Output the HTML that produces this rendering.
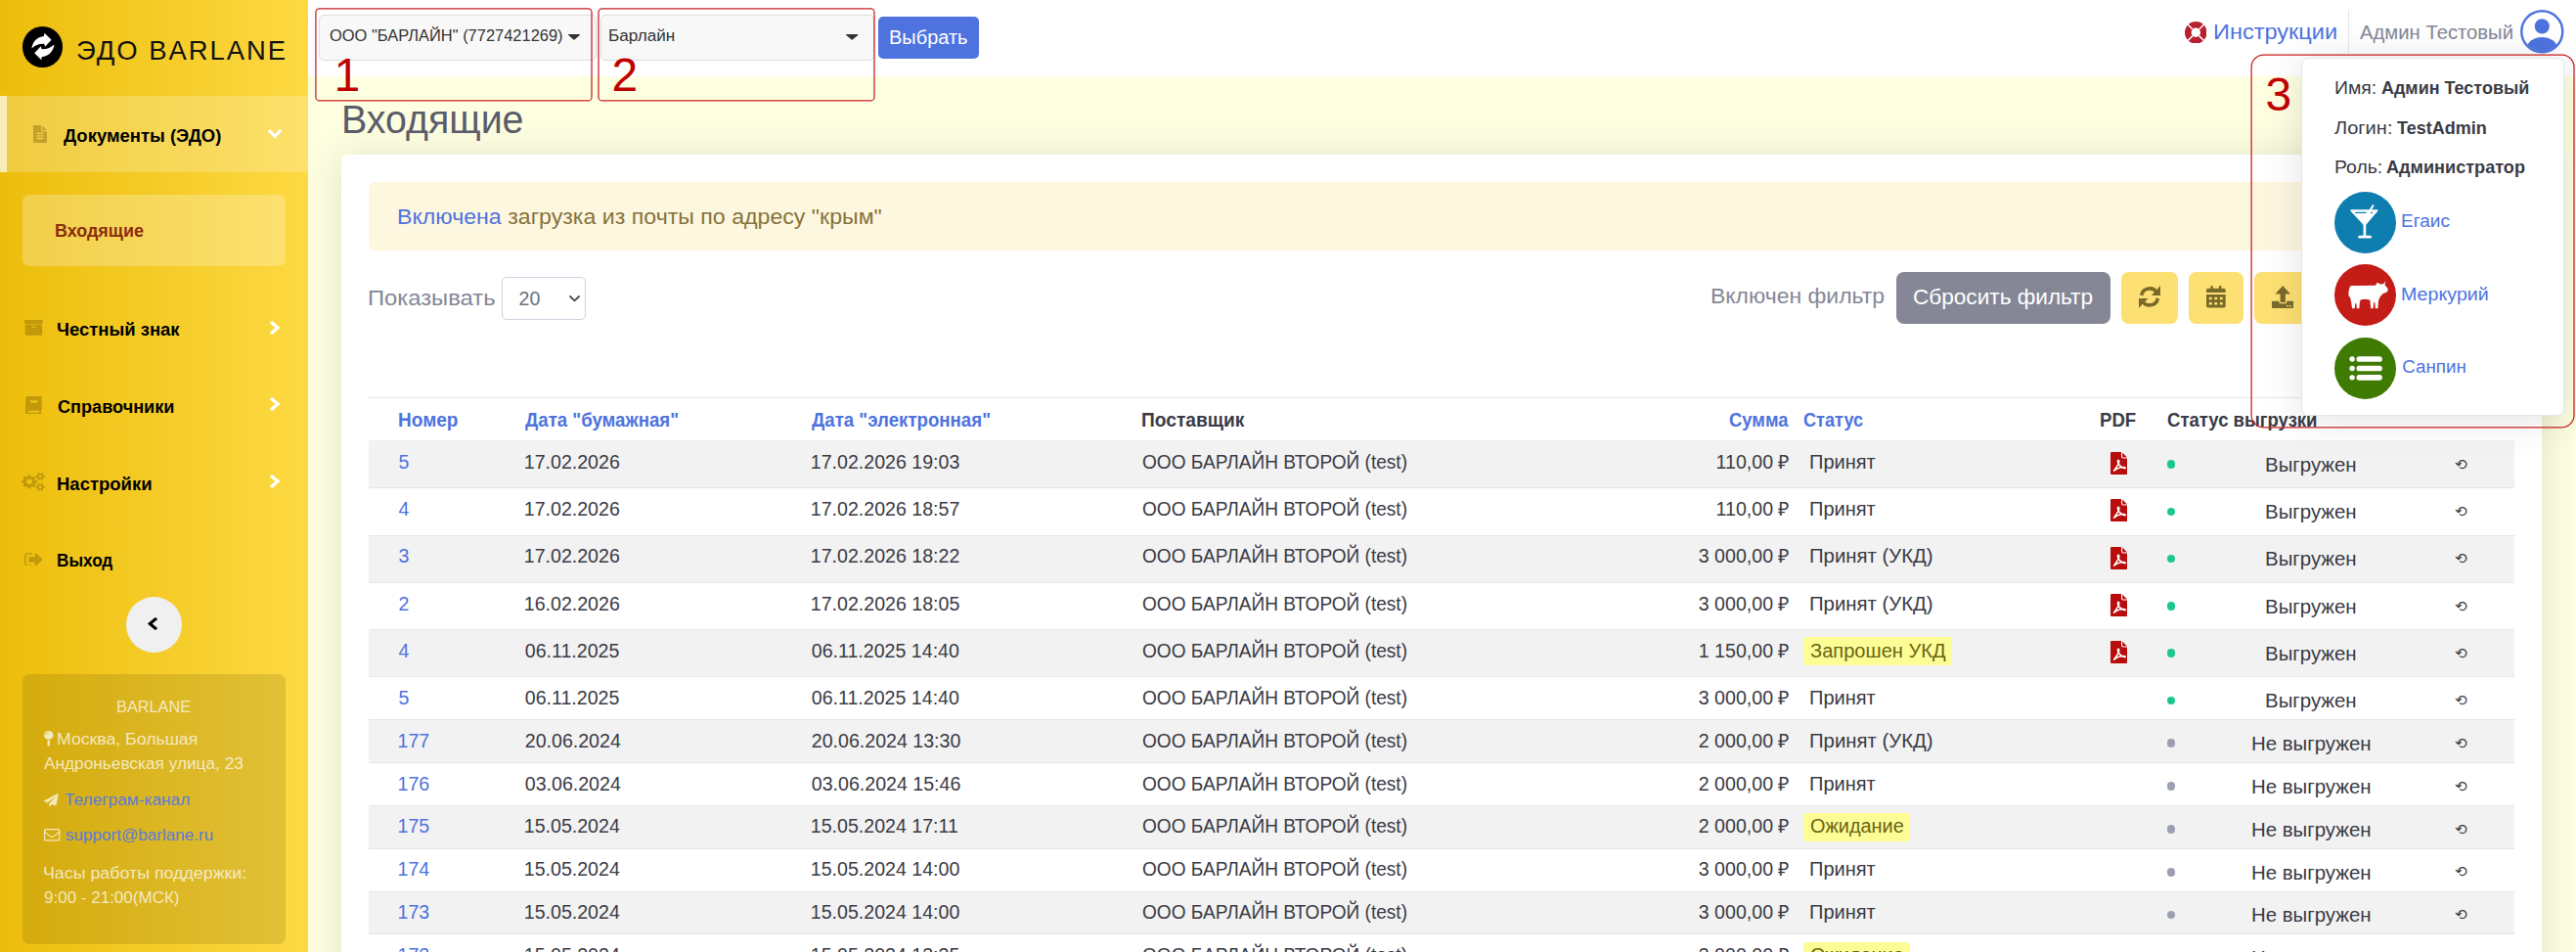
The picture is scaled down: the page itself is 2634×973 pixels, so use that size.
<!DOCTYPE html>
<html lang="ru"><head><meta charset="utf-8"><title>Входящие — ЭДО BARLANE</title>
<style>
html,body{margin:0;padding:0}
body{width:2634px;height:973px;overflow:hidden;position:relative;background:#fefee0;font-family:"Liberation Sans",sans-serif;}
.b{position:absolute;box-sizing:border-box;display:block}
.t{position:absolute;white-space:nowrap;line-height:1;}
a{color:inherit;text-decoration:none}
</style></head><body>
<div class="b" style="left:315px;top:78px;width:2319px;height:895px;background:#fefee1;"></div>
<div class="b" style="left:348.75px;top:158px;width:2250.5px;height:900px;background:#fff;border-radius:5.5px;box-shadow:0 3px 39px rgba(58,59,69,.15);"></div>
<div class="b" style="left:2632.6px;top:78px;width:1.4px;height:895px;background:#fdfdf4;"></div>
<div class="b" style="left:315px;top:0px;width:2319px;height:78px;background:#fff;"></div>
<div class="b" style="left:0px;top:0px;width:315px;height:973px;background:linear-gradient(90deg,#ecbd0b 0%,#fdd942 100%);"></div>
<div class="b" style="left:22.6px;top:27.2px;width:41.6px;height:41.6px;background:#000;border-radius:21px;"></div>
<svg class="b" style="left:22.6px;top:27.2px;" width="41.6" height="41.6" viewBox="0 0 41.6 41.6"><g fill="#fff"><path id="lg" d="M9.4 22.6 C10 16 15 10.5 22 10 L22.5 6.8 L29.6 13.8 L23 20.8 L22.3 17.9 C17 17.5 13 19.5 9.4 22.6 Z"/><path transform="rotate(180 20.9 20.5)" d="M9.4 22.6 C10 16 15 10.5 22 10 L22.5 6.8 L29.6 13.8 L23 20.8 L22.3 17.9 C17 17.5 13 19.5 9.4 22.6 Z"/></g></svg>
<div class="t" style="left:78.00px;top:37.80px;font-size:27.4px;color:#111;letter-spacing:2.0px;">ЭДО BARLANE</div>
<div class="b" style="left:0px;top:97.5px;width:315px;height:78.25px;background:rgba(255,255,255,.22);"></div>
<div class="b" style="left:0px;top:97.5px;width:6.5px;height:78.25px;background:rgba(255,255,255,.62);"></div>
<svg class="b" style="left:34px;top:128px;" width="14" height="18" viewBox="0 -1536 1536 1792" preserveAspectRatio="none"><path fill="rgba(120,90,0,.38)" transform="scale(1,-1)" d="M1468 1060q14 -14 28 -36h-472v472q22 -14 36 -28zM992 896h544v-1056q0 -40 -28 -68t-68 -28h-1344q-40 0 -68 28t-28 68v1600q0 40 28 68t68 28h800v-544q0 -40 28 -68t68 -28zM1152 160v64q0 14 -9 23t-23 9h-704q-14 0 -23 -9t-9 -23v-64q0 -14 9 -23t23 -9h704
q14 0 23 9t9 23zM1152 416v64q0 14 -9 23t-23 9h-704q-14 0 -23 -9t-9 -23v-64q0 -14 9 -23t23 -9h704q14 0 23 9t9 23zM1152 672v64q0 14 -9 23t-23 9h-704q-14 0 -23 -9t-9 -23v-64q0 -14 9 -23t23 -9h704q14 0 23 9t9 23z"/></svg>
<div class="t" style="left:64.50px;top:128.90px;font-size:19.2px;color:#000;font-weight:700;transform:scaleX(0.9619);transform-origin:0 0;">Документы (ЭДО)</div>
<svg class="b" style="left:274px;top:132px;" width="14" height="9.5" viewBox="90 -1003 1612 1035" preserveAspectRatio="none"><path fill="#fff" transform="scale(1,-1)" d="M1683 728l-742 -741q-19 -19 -45 -19t-45 19l-742 741q-19 19 -19 45.5t19 45.5l166 165q19 19 45 19t45 -19l531 -531l531 531q19 19 45 19t45 -19l166 -165q19 -19 19 -45.5t-19 -45.5z"/></svg>
<div class="b" style="left:22.7px;top:199px;width:269.8px;height:73.4px;background:rgba(255,255,255,.25);border-radius:7px;"></div>
<div class="t" style="left:55.71px;top:226.90px;font-size:18.2px;color:#8b2d0c;font-weight:700;transform:scaleX(0.9856);transform-origin:0 0;">Входящие</div>
<svg class="b" style="left:25px;top:327.2px;" width="18.8" height="15.7" viewBox="64 -1408 1664 1536" preserveAspectRatio="none"><path fill="rgba(120,90,0,.38)" transform="scale(1,-1)" d="M1088 704q0 26 -19 45t-45 19h-256q-26 0 -45 -19t-19 -45t19 -45t45 -19h256q26 0 45 19t19 45zM1664 896v-960q0 -26 -19 -45t-45 -19h-1408q-26 0 -45 19t-19 45v960q0 26 19 45t45 19h1408q26 0 45 -19t19 -45zM1728 1344v-256q0 -26 -19 -45t-45 -19h-1536
q-26 0 -45 19t-19 45v256q0 26 19 45t45 19h1536q26 0 45 -19t19 -45z"/></svg>
<div class="t" style="left:57.54px;top:326.90px;font-size:19.2px;color:#000;font-weight:700;transform:scaleX(0.9625);transform-origin:0 0;">Честный знак</div>
<svg class="b" style="left:275.8px;top:327.8px;" width="10.2" height="14" viewBox="90 -1510 1036 1612" preserveAspectRatio="none"><path fill="#fff" transform="scale(1,-1)" d="M1107 659l-742 -742q-19 -19 -45 -19t-45 19l-166 166q-19 19 -19 45t19 45l531 531l-531 531q-19 19 -19 45t19 45l166 166q19 19 45 19t45 -19l742 -742q19 -19 19 -45t-19 -45z"/></svg>
<svg class="b" style="left:26.2px;top:404.5px;" width="16.7" height="18.7" viewBox="0 0 16.6 18.6"><path fill-rule="evenodd" fill="rgba(120,90,0,.38)" d="M3 0 H15.4 Q16.6 0 16.6 1.2 V13.4 Q16.6 14.3 15.8 14.5 V16.8 Q16.6 17 16.6 17.8 Q16.6 18.6 15.6 18.6 H3 Q0 18.6 0 15.6 V3 Q0 0 3 0 Z M5 4.2 V6.6 H12.6 V4.2 Z M3.2 14.8 Q2.2 14.8 2.2 15.8 Q2.2 16.6 3.2 16.6 H13.8 V14.8 Z"/></svg>
<div class="t" style="left:58.50px;top:405.90px;font-size:19.2px;color:#000;font-weight:700;transform:scaleX(0.9439);transform-origin:0 0;">Справочники</div>
<svg class="b" style="left:275.8px;top:406.4px;" width="10.2" height="14" viewBox="90 -1510 1036 1612" preserveAspectRatio="none"><path fill="#fff" transform="scale(1,-1)" d="M1107 659l-742 -742q-19 -19 -45 -19t-45 19l-166 166q-19 19 -19 45t19 45l531 531l-531 531q-19 19 -19 45t19 45l166 166q19 19 45 19t45 -19l742 -742q19 -19 19 -45t-19 -45z"/></svg>
<svg class="b" style="left:22.4px;top:483.2px;" width="23.9" height="18.7" viewBox="0 -1520 1920 1761" preserveAspectRatio="none"><path fill="rgba(120,90,0,.38)" transform="scale(1,-1)" d="M896 640q0 106 -75 181t-181 75t-181 -75t-75 -181t75 -181t181 -75t181 75t75 181zM1664 128q0 52 -38 90t-90 38t-90 -38t-38 -90q0 -53 37.5 -90.5t90.5 -37.5t90.5 37.5t37.5 90.5zM1664 1152q0 52 -38 90t-90 38t-90 -38t-38 -90q0 -53 37.5 -90.5t90.5 -37.5
t90.5 37.5t37.5 90.5zM1280 731v-185q0 -10 -7 -19.5t-16 -10.5l-155 -24q-11 -35 -32 -76q34 -48 90 -115q7 -11 7 -20q0 -12 -7 -19q-23 -30 -82.5 -89.5t-78.5 -59.5q-11 0 -21 7l-115 90q-37 -19 -77 -31q-11 -108 -23 -155q-7 -24 -30 -24h-186q-11 0 -20 7.5t-10 17.5
l-23 153q-34 10 -75 31l-118 -89q-7 -7 -20 -7q-11 0 -21 8q-144 133 -144 160q0 9 7 19q10 14 41 53t47 61q-23 44 -35 82l-152 24q-10 1 -17 9.5t-7 19.5v185q0 10 7 19.5t16 10.5l155 24q11 35 32 76q-34 48 -90 115q-7 11 -7 20q0 12 7 20q22 30 82 89t79 59q11 0 21 -7
l115 -90q34 18 77 32q11 108 23 154q7 24 30 24h186q11 0 20 -7.5t10 -17.5l23 -153q34 -10 75 -31l118 89q8 7 20 7q11 0 21 -8q144 -133 144 -160q0 -8 -7 -19q-12 -16 -42 -54t-45 -60q23 -48 34 -82l152 -23q10 -2 17 -10.5t7 -19.5zM1920 198v-140q0 -16 -149 -31
q-12 -27 -30 -52q51 -113 51 -138q0 -4 -4 -7q-122 -71 -124 -71q-8 0 -46 47t-52 68q-20 -2 -30 -2t-30 2q-14 -21 -52 -68t-46 -47q-2 0 -124 71q-4 3 -4 7q0 25 51 138q-18 25 -30 52q-149 15 -149 31v140q0 16 149 31q13 29 30 52q-51 113 -51 138q0 4 4 7q4 2 35 20
t59 34t30 16q8 0 46 -46.5t52 -67.5q20 2 30 2t30 -2q51 71 92 112l6 2q4 0 124 -70q4 -3 4 -7q0 -25 -51 -138q17 -23 30 -52q149 -15 149 -31zM1920 1222v-140q0 -16 -149 -31q-12 -27 -30 -52q51 -113 51 -138q0 -4 -4 -7q-122 -71 -124 -71q-8 0 -46 47t-52 68
q-20 -2 -30 -2t-30 2q-14 -21 -52 -68t-46 -47q-2 0 -124 71q-4 3 -4 7q0 25 51 138q-18 25 -30 52q-149 15 -149 31v140q0 16 149 31q13 29 30 52q-51 113 -51 138q0 4 4 7q4 2 35 20t59 34t30 16q8 0 46 -46.5t52 -67.5q20 2 30 2t30 -2q51 71 92 112l6 2q4 0 124 -70
q4 -3 4 -7q0 -25 -51 -138q17 -23 30 -52q149 -15 149 -31z"/></svg>
<div class="t" style="left:57.54px;top:484.90px;font-size:19.2px;color:#000;font-weight:700;transform:scaleX(0.9644);transform-origin:0 0;">Настройки</div>
<svg class="b" style="left:275.8px;top:485.3px;" width="10.2" height="14" viewBox="90 -1510 1036 1612" preserveAspectRatio="none"><path fill="#fff" transform="scale(1,-1)" d="M1107 659l-742 -742q-19 -19 -45 -19t-45 19l-166 166q-19 19 -19 45t19 45l531 531l-531 531q-19 19 -19 45t19 45l166 166q19 19 45 19t45 -19l742 -742q19 -19 19 -45t-19 -45z"/></svg>
<svg class="b" style="left:24.7px;top:564.7px;" width="18.7" height="13.8" viewBox="0 -1280 1568 1280" preserveAspectRatio="none"><path fill="rgba(120,90,0,.38)" transform="scale(1,-1)" d="M640 96q0 -4 1 -20t0.5 -26.5t-3 -23.5t-10 -19.5t-20.5 -6.5h-320q-119 0 -203.5 84.5t-84.5 203.5v704q0 119 84.5 203.5t203.5 84.5h320q13 0 22.5 -9.5t9.5 -22.5q0 -4 1 -20t0.5 -26.5t-3 -23.5t-10 -19.5t-20.5 -6.5h-320q-66 0 -113 -47t-47 -113v-704
q0 -66 47 -113t113 -47h288h11h13t11.5 -1t11.5 -3t8 -5.5t7 -9t2 -13.5zM1568 640q0 -26 -19 -45l-544 -544q-19 -19 -45 -19t-45 19t-19 45v288h-448q-26 0 -45 19t-19 45v384q0 26 19 45t45 19h448v288q0 26 19 45t45 19t45 -19l544 -544q19 -19 19 -45z"/></svg>
<div class="t" style="left:57.61px;top:562.90px;font-size:19.2px;color:#000;font-weight:700;transform:scaleX(0.8934);transform-origin:0 0;">Выход</div>
<div class="b" style="left:129.3px;top:610px;width:56.7px;height:56.7px;background:#f0f0f0;border-radius:29px;"></div>
<svg class="b" style="left:151px;top:631px;" width="10" height="13" viewBox="154 -1510 1036 1612" preserveAspectRatio="none"><path fill="#000" transform="scale(1,-1)" d="M1171 1235l-531 -531l531 -531q19 -19 19 -45t-19 -45l-166 -166q-19 -19 -45 -19t-45 19l-742 742q-19 19 -19 45t19 45l742 742q19 19 45 19t45 -19l166 -166q19 -19 19 -45t-19 -45z"/></svg>
<div class="b" style="left:22.8px;top:689.2px;width:269.7px;height:275.6px;background:rgba(0,0,0,.1);border-radius:7px;"></div>
<div class="t" style="left:119.13px;top:715.10px;font-size:16.8px;color:rgba(255,255,255,.72);transform:scaleX(0.9721);transform-origin:0 0;">BARLANE</div>
<svg class="b" style="left:45.3px;top:747px;" width="9.5" height="15.5" viewBox="0 -1536 1024 1792" preserveAspectRatio="none"><path fill="rgba(255,255,255,.72)" transform="scale(1,-1)" d="M512 448q66 0 128 15v-655q0 -26 -19 -45t-45 -19h-128q-26 0 -45 19t-19 45v655q62 -15 128 -15zM512 1536q212 0 362 -150t150 -362t-150 -362t-362 -150t-362 150t-150 362t150 362t362 150zM512 1312q14 0 23 9t9 23t-9 23t-23 9q-146 0 -249 -103t-103 -249
q0 -14 9 -23t23 -9t23 9t9 23q0 119 84.5 203.5t203.5 84.5z"/></svg>
<div class="t" style="left:57.95px;top:748.10px;font-size:16.8px;color:rgba(255,255,255,.72);transform:scaleX(1.0524);transform-origin:0 0;">Москва, Большая</div>
<div class="t" style="left:45.30px;top:773.10px;font-size:16.8px;color:rgba(255,255,255,.72);transform:scaleX(1.0280);transform-origin:0 0;">Андроньевская улица, 23</div>
<svg class="b" style="left:45.3px;top:810.5px;" width="14.7" height="13.5" viewBox="-0.1111111119389534 -1536 1792.0341796875 1792" preserveAspectRatio="none"><path fill="rgba(255,255,255,.72)" transform="scale(1,-1)" d="M1764 1525q33 -24 27 -64l-256 -1536q-5 -29 -32 -45q-14 -8 -31 -8q-11 0 -24 5l-453 185l-242 -295q-18 -23 -49 -23q-13 0 -22 4q-19 7 -30.5 23.5t-11.5 36.5v349l864 1059l-1069 -925l-395 162q-37 14 -40 55q-2 40 32 59l1664 960q15 9 32 9q20 0 36 -11z"/></svg>
<div class="t" style="left:65.60px;top:810.10px;font-size:16.8px;color:#5a7bd8;transform:scaleX(1.0294);transform-origin:0 0;"><a>Телеграм-канал</a></div>
<svg class="b" style="left:45.3px;top:847px;" width="16.3" height="12.5" viewBox="0 -1280 1792 1408" preserveAspectRatio="none"><path fill="rgba(255,255,255,.72)" transform="scale(1,-1)" d="M1664 32v768q-32 -36 -69 -66q-268 -206 -426 -338q-51 -43 -83 -67t-86.5 -48.5t-102.5 -24.5h-1h-1q-48 0 -102.5 24.5t-86.5 48.5t-83 67q-158 132 -426 338q-37 30 -69 66v-768q0 -13 9.5 -22.5t22.5 -9.5h1472q13 0 22.5 9.5t9.5 22.5zM1664 1083v11v13.5t-0.5 13
t-3 12.5t-5.5 9t-9 7.5t-14 2.5h-1472q-13 0 -22.5 -9.5t-9.5 -22.5q0 -168 147 -284q193 -152 401 -317q6 -5 35 -29.5t46 -37.5t44.5 -31.5t50.5 -27.5t43 -9h1h1q20 0 43 9t50.5 27.5t44.5 31.5t46 37.5t35 29.5q208 165 401 317q54 43 100.5 115.5t46.5 131.5z
M1792 1120v-1088q0 -66 -47 -113t-113 -47h-1472q-66 0 -113 47t-47 113v1088q0 66 47 113t113 47h1472q66 0 113 -47t47 -113z"/></svg>
<div class="t" style="left:67.10px;top:846.10px;font-size:16.8px;color:#5a7bd8;transform:scaleX(1.0179);transform-origin:0 0;"><a>support@barlane.ru</a></div>
<div class="t" style="left:44.24px;top:885.10px;font-size:16.8px;color:rgba(255,255,255,.72);transform:scaleX(1.0616);transform-origin:0 0;">Часы работы поддержки:</div>
<div class="t" style="left:45.30px;top:910.10px;font-size:16.8px;color:rgba(255,255,255,.72);transform:scaleX(1.0137);transform-origin:0 0;">9:00 - 21:00(МСК)</div>
<div class="b" style="left:326px;top:15px;width:283.5px;height:47.4px;border-radius:5px;background:#f8f8f8;border:1px solid #ddd;"></div>
<div class="t" style="left:337.00px;top:29.10px;font-size:16.8px;color:#333;transform:scaleX(0.9803);transform-origin:0 0;">ООО "БАРЛАЙН" (7727421269)</div>
<svg class="b" style="left:581px;top:35px;" width="12" height="5.8" viewBox="0 -896 1024 576" preserveAspectRatio="none"><path fill="#333" transform="scale(1,-1)" d="M1024 832q0 -26 -19 -45l-448 -448q-19 -19 -45 -19t-45 19l-448 448q-19 19 -19 45t19 45t45 19h896q26 0 45 -19t19 -45z"/></svg>
<div class="b" style="left:613.75px;top:15px;width:279.8px;height:47.4px;border-radius:5px;background:#f8f8f8;border:1px solid #ddd;"></div>
<div class="t" style="left:621.98px;top:29.10px;font-size:16.8px;color:#333;transform:scaleX(1.0213);transform-origin:0 0;">Барлайн</div>
<svg class="b" style="left:865px;top:35px;" width="12.5" height="5.8" viewBox="0 -896 1024 576" preserveAspectRatio="none"><path fill="#333" transform="scale(1,-1)" d="M1024 832q0 -26 -19 -45l-448 -448q-19 -19 -45 -19t-45 19l-448 448q-19 19 -19 45t19 45t45 19h896q26 0 45 -19t19 -45z"/></svg>
<div class="b" style="left:897.5px;top:17px;width:103.75px;height:43px;background:#4e73df;border-radius:5px;"></div>
<div class="t" style="left:908.76px;top:29.20px;font-size:19.6px;color:#fff;transform:scaleX(1.0198);transform-origin:0 0;">Выбрать</div>
<svg class="b" style="left:320px;top:6px;" width="290" height="100" viewBox="320 6 290 100"><rect x="322.9" y="8.95" width="282.1" height="94" rx="3.8" fill="none" stroke="#c81e1e" stroke-width="1.25"/></svg>
<svg class="b" style="left:608px;top:6px;" width="290" height="100" viewBox="608 6 290 100"><rect x="612" y="8.95" width="282" height="94" rx="3.8" fill="none" stroke="#c81e1e" stroke-width="1.25"/></svg>
<div class="t" style="left:341.50px;top:52.50px;font-size:48px;color:#c00000;">1</div>
<div class="t" style="left:625.50px;top:52.50px;font-size:48px;color:#c00000;">2</div>
<svg class="b" style="left:2233.6px;top:21.8px;" width="22.6" height="22.6" viewBox="0 0 22.6 22.6"><circle cx="11.3" cy="11.3" r="8" fill="none" stroke="#b8202f" stroke-width="6.6"/><g stroke="#fff" stroke-width="1.5"><path d="M3 3 L8 8 M19.6 3 L14.6 8 M3 19.6 L8 14.6 M19.6 19.6 L14.6 14.6"/></g></svg>
<div class="t" style="left:2263.20px;top:22.30px;font-size:22.4px;color:#4e73df;transform:scaleX(1.0512);transform-origin:0 0;"><a>Инструкции</a></div>
<div class="b" style="left:2400.5px;top:10px;width:1px;height:44px;background:#e3e6f0;"></div>
<div class="t" style="left:2413.25px;top:24.20px;font-size:19.6px;color:#858796;transform:scaleX(1.0339);transform-origin:0 0;">Админ Тестовый</div>
<svg class="b" style="left:2577px;top:10px;" width="44.6" height="44.6" viewBox="0 0 44.6 44.6"><defs><clipPath id="av"><circle cx="22.3" cy="22.3" r="20"/></clipPath></defs><circle cx="22.3" cy="22.3" r="21" fill="#fff" stroke="#4e73df" stroke-width="2.4"/><g clip-path="url(#av)" fill="#4e73df"><circle cx="22.3" cy="16.8" r="7.6"/><ellipse cx="22.3" cy="39.5" rx="15.5" ry="11.5"/></g></svg>
<div class="t" style="left:348.63px;top:103.10px;font-size:39.8px;color:#5a5c69;transform:scaleX(0.9883);transform-origin:0 0;">Входящие</div>
<div class="b" style="left:377px;top:186.25px;width:2194px;height:69.25px;background:#fef7e0;border-radius:6px;"></div>
<div class="t" style="left:405.97px;top:211.30px;font-size:22.4px;color:#85733a;transform:scaleX(1.0333);transform-origin:0 0;"><a style="color:#4e73df">Включена</a> загрузка из почты по адресу "крым"</div>
<div class="t" style="left:376.44px;top:294.30px;font-size:22.4px;color:#858796;transform:scaleX(1.0618);transform-origin:0 0;">Показывать</div>
<div class="b" style="left:513.25px;top:283.25px;width:85.5px;height:43.5px;background:#fff;border-radius:5px;border:1px solid #d1d3e2;"></div>
<div class="t" style="left:530.50px;top:296.20px;font-size:19.6px;color:#6e707e;">20</div>
<svg class="b" style="left:580.5px;top:301px;" width="13" height="8" viewBox="0 0 13 8"><path d="M1.5 1.5 L6.5 6.3 L11.5 1.5" fill="none" stroke="#444" stroke-width="1.8"/></svg>
<div class="t" style="left:1749.48px;top:292.30px;font-size:22.4px;color:#858796;transform:scaleX(1.0249);transform-origin:0 0;">Включен фильтр</div>
<div class="b" style="left:1939.25px;top:278.25px;width:218.25px;height:52.5px;background:#858796;border-radius:8px;"></div>
<div class="t" style="left:1956.14px;top:293.30px;font-size:22.4px;color:#fff;transform:scaleX(1.0088);transform-origin:0 0;">Сбросить фильтр</div>
<div class="b" style="left:2169px;top:278.2px;width:58px;height:52.8px;background:#fde073;border-radius:7.5px;"></div>
<svg class="b" style="left:2186.9px;top:292.2px;" width="22" height="22.8" viewBox="0 0 22 22.8"><g fill="none" stroke="#7a6a2a" stroke-width="3.6"><path d="M2.63 9.92 A8.5 8.5 0 0 1 18.7 7.8"/><path d="M19.37 12.88 A8.5 8.5 0 0 1 3.3 15"/></g><path fill="#7a6a2a" d="M22 0 V10 H13 Z M0 22.8 V12.9 H9.4 Z"/></svg>
<div class="b" style="left:2238.1px;top:278.2px;width:55.6px;height:52.8px;background:#fde073;border-radius:7.5px;"></div>
<svg class="b" style="left:2256.2px;top:292.4px;" width="19.7" height="22.6" viewBox="0 0 19.7 22.6"><path fill-rule="evenodd" fill="#7a6a2a" d="M4.5 0 H6.7 V2.85 H13 V0 H15.3 V2.85 H17.7 Q19.7 2.85 19.7 4.85 V7.1 H0 V4.85 Q0 2.85 2 2.85 H4.5 Z M0 9 H19.7 V20.6 Q19.7 22.6 17.7 22.6 H2 Q0 22.6 0 20.6 Z M2.85 11.65 V14.3 H5.7 V11.65 Z M8.3 11.65 V14.3 H11.2 V11.65 Z M13.85 11.65 V14.3 H16.7 V11.65 Z M2.85 16.9 V19.6 H5.7 V16.9 Z M8.3 16.9 V19.6 H11.2 V16.9 Z M13.85 16.9 V19.6 H16.7 V16.9 Z"/></svg>
<div class="b" style="left:2304.9px;top:278.2px;width:57.6px;height:52.8px;background:#fde073;border-radius:7.5px;"></div>
<svg class="b" style="left:2322.6px;top:292px;" width="22.4" height="23" viewBox="0 0 22.4 23"><path fill-rule="evenodd" fill="#7a6a2a" d="M11.2 0 L19 8.6 H13.9 V17.1 H8.6 V8.6 H3.5 Z M0 16.7 Q0 15.7 1 15.7 H7.4 V17.3 Q7.4 18.3 8.4 18.3 H14.1 Q15.1 18.3 15.1 17.3 V15.7 H21.4 Q22.4 15.7 22.4 16.7 V22 Q22.4 23 21.4 23 H1 Q0 23 0 22 Z M15.1 20 V21.6 H16.7 V20 Z M17.9 20 V21.6 H19.6 V20 Z"/></svg>
<div class="b" style="left:377px;top:405.75px;width:2194px;height:1px;background:#e3e6f0;"></div>
<div class="b" style="left:377px;top:449.5px;width:2194px;height:1.2px;background:#dfe2ee;"></div>
<div class="t" style="left:406.53px;top:420.20px;font-size:19.6px;color:#4e73df;font-weight:700;transform:scaleX(0.9719);transform-origin:0 0;">Номер</div>
<div class="t" style="left:536.75px;top:420.20px;font-size:19.6px;color:#4e73df;font-weight:700;transform:scaleX(0.9511);transform-origin:0 0;">Дата "бумажная"</div>
<div class="t" style="left:829.50px;top:420.20px;font-size:19.6px;color:#4e73df;font-weight:700;transform:scaleX(0.9524);transform-origin:0 0;">Дата "электронная"</div>
<div class="t" style="left:1166.52px;top:420.20px;font-size:19.6px;color:#3a3b45;font-weight:700;transform:scaleX(0.9784);transform-origin:0 0;">Поставщик</div>
<div class="t" style="left:1768.00px;top:420.20px;font-size:19.6px;color:#4e73df;font-weight:700;transform:scaleX(0.9387);transform-origin:0 0;">Сумма</div>
<div class="t" style="left:1843.75px;top:420.20px;font-size:19.6px;color:#4e73df;font-weight:700;transform:scaleX(0.9261);transform-origin:0 0;">Статус</div>
<div class="t" style="left:2147.33px;top:420.20px;font-size:19.6px;color:#3a3b45;font-weight:700;transform:scaleX(0.9485);transform-origin:0 0;">PDF</div>
<div class="t" style="left:2216.25px;top:420.20px;font-size:19.6px;color:#3a3b45;font-weight:700;transform:scaleX(0.9454);transform-origin:0 0;">Статус выгрузки</div>
<div class="b" style="left:377px;top:450.4px;width:2194px;height:48.24px;background:#f2f2f2;"></div>
<div class="t" style="left:407.50px;top:463.20px;font-size:19.6px;color:#4e73df;"><a>5</a></div>
<div class="t" style="left:535.75px;top:463.20px;font-size:19.6px;color:#3a3b45;">17.02.2026</div>
<div class="t" style="left:828.80px;top:463.20px;font-size:19.6px;color:#3a3b45;">17.02.2026 19:03</div>
<div class="t" style="left:1167.50px;top:463.20px;font-size:19.6px;color:#3a3b45;transform:scaleX(0.9736);transform-origin:0 0;">ООО БАРЛАЙН ВТОРОЙ (test)</div>
<div class="t" style="left:1754.58px;top:463.20px;font-size:19.6px;color:#3a3b45;">110,00 ₽</div>
<div class="t" style="left:1850.23px;top:463.20px;font-size:19.6px;color:#3a3b45;transform:scaleX(1.0213);transform-origin:0 0;">Принят</div>
<svg class="b" style="left:2157.5px;top:462.09999999999997px;" width="17.5" height="23" viewBox="0 0 17.5 23"><path d="M0 1.2 Q0 0 1.2 0 H11.6 L17.5 6 V21.8 Q17.5 23 16.3 23 H1.2 Q0 23 0 21.8 Z" fill="#b80d0d"/><path d="M11.6 0 V4.8 Q11.6 6 12.8 6 H17.5" fill="none" stroke="#fff" stroke-width="1.1"/><path d="M3.6 19.2 C5.2 16.2 8.8 13.4 8.8 9.6 C8.8 7.6 7.2 7.8 7.4 9.8 C7.8 12.8 11.2 16 14.4 16.6 C15.4 16.8 15.6 15.6 14.2 15.6 C10.4 15.6 5.6 17.4 3.6 19.2 Z" fill="none" stroke="#fff" stroke-width="1.5" stroke-linejoin="round"/></svg>
<div class="b" style="left:2215.55px;top:470.4px;width:8.6px;height:8.6px;background:#1cc88a;border-radius:5px;"></div>
<div class="t" style="left:2316.08px;top:466.20px;font-size:19.6px;color:#3a3b45;transform:scaleX(1.0427);transform-origin:0 0;">Выгружен</div>
<div class="t" style="left:2510.1px;top:467.90px;font-size:15.2px;font-family:'DejaVu Sans',sans-serif;color:#3a3b45">⟲</div>
<div class="b" style="left:377px;top:498px;width:2194px;height:1px;background:#e3e6f0;"></div>
<div class="t" style="left:407.50px;top:511.20px;font-size:19.6px;color:#4e73df;"><a>4</a></div>
<div class="t" style="left:535.75px;top:511.20px;font-size:19.6px;color:#3a3b45;">17.02.2026</div>
<div class="t" style="left:828.80px;top:511.20px;font-size:19.6px;color:#3a3b45;">17.02.2026 18:57</div>
<div class="t" style="left:1167.50px;top:511.20px;font-size:19.6px;color:#3a3b45;transform:scaleX(0.9736);transform-origin:0 0;">ООО БАРЛАЙН ВТОРОЙ (test)</div>
<div class="t" style="left:1754.58px;top:511.20px;font-size:19.6px;color:#3a3b45;">110,00 ₽</div>
<div class="t" style="left:1850.23px;top:511.20px;font-size:19.6px;color:#3a3b45;transform:scaleX(1.0213);transform-origin:0 0;">Принят</div>
<svg class="b" style="left:2157.5px;top:510.34px;" width="17.5" height="23" viewBox="0 0 17.5 23"><path d="M0 1.2 Q0 0 1.2 0 H11.6 L17.5 6 V21.8 Q17.5 23 16.3 23 H1.2 Q0 23 0 21.8 Z" fill="#b80d0d"/><path d="M11.6 0 V4.8 Q11.6 6 12.8 6 H17.5" fill="none" stroke="#fff" stroke-width="1.1"/><path d="M3.6 19.2 C5.2 16.2 8.8 13.4 8.8 9.6 C8.8 7.6 7.2 7.8 7.4 9.8 C7.8 12.8 11.2 16 14.4 16.6 C15.4 16.8 15.6 15.6 14.2 15.6 C10.4 15.6 5.6 17.4 3.6 19.2 Z" fill="none" stroke="#fff" stroke-width="1.5" stroke-linejoin="round"/></svg>
<div class="b" style="left:2215.55px;top:518.64px;width:8.6px;height:8.6px;background:#1cc88a;border-radius:5px;"></div>
<div class="t" style="left:2316.08px;top:514.20px;font-size:19.6px;color:#3a3b45;transform:scaleX(1.0427);transform-origin:0 0;">Выгружен</div>
<div class="t" style="left:2510.1px;top:516.14px;font-size:15.2px;font-family:'DejaVu Sans',sans-serif;color:#3a3b45">⟲</div>
<div class="b" style="left:377px;top:546.88px;width:2194px;height:48.24px;background:#f2f2f2;"></div>
<div class="b" style="left:377px;top:547px;width:2194px;height:1px;background:#e3e6f0;"></div>
<div class="t" style="left:407.50px;top:559.20px;font-size:19.6px;color:#4e73df;"><a>3</a></div>
<div class="t" style="left:535.75px;top:559.20px;font-size:19.6px;color:#3a3b45;">17.02.2026</div>
<div class="t" style="left:828.80px;top:559.20px;font-size:19.6px;color:#3a3b45;">17.02.2026 18:22</div>
<div class="t" style="left:1167.50px;top:559.20px;font-size:19.6px;color:#3a3b45;transform:scaleX(0.9736);transform-origin:0 0;">ООО БАРЛАЙН ВТОРОЙ (test)</div>
<div class="t" style="left:1736.79px;top:559.20px;font-size:19.6px;color:#3a3b45;">3 000,00 ₽</div>
<div class="t" style="left:1850.21px;top:559.20px;font-size:19.6px;color:#3a3b45;transform:scaleX(1.0380);transform-origin:0 0;">Принят (УКД)</div>
<svg class="b" style="left:2157.5px;top:558.58px;" width="17.5" height="23" viewBox="0 0 17.5 23"><path d="M0 1.2 Q0 0 1.2 0 H11.6 L17.5 6 V21.8 Q17.5 23 16.3 23 H1.2 Q0 23 0 21.8 Z" fill="#b80d0d"/><path d="M11.6 0 V4.8 Q11.6 6 12.8 6 H17.5" fill="none" stroke="#fff" stroke-width="1.1"/><path d="M3.6 19.2 C5.2 16.2 8.8 13.4 8.8 9.6 C8.8 7.6 7.2 7.8 7.4 9.8 C7.8 12.8 11.2 16 14.4 16.6 C15.4 16.8 15.6 15.6 14.2 15.6 C10.4 15.6 5.6 17.4 3.6 19.2 Z" fill="none" stroke="#fff" stroke-width="1.5" stroke-linejoin="round"/></svg>
<div class="b" style="left:2215.55px;top:566.88px;width:8.6px;height:8.6px;background:#1cc88a;border-radius:5px;"></div>
<div class="t" style="left:2316.08px;top:562.20px;font-size:19.6px;color:#3a3b45;transform:scaleX(1.0427);transform-origin:0 0;">Выгружен</div>
<div class="t" style="left:2510.1px;top:564.38px;font-size:15.2px;font-family:'DejaVu Sans',sans-serif;color:#3a3b45">⟲</div>
<div class="b" style="left:377px;top:595px;width:2194px;height:1px;background:#e3e6f0;"></div>
<div class="t" style="left:407.50px;top:608.20px;font-size:19.6px;color:#4e73df;"><a>2</a></div>
<div class="t" style="left:535.75px;top:608.20px;font-size:19.6px;color:#3a3b45;">16.02.2026</div>
<div class="t" style="left:828.80px;top:608.20px;font-size:19.6px;color:#3a3b45;">17.02.2026 18:05</div>
<div class="t" style="left:1167.50px;top:608.20px;font-size:19.6px;color:#3a3b45;transform:scaleX(0.9736);transform-origin:0 0;">ООО БАРЛАЙН ВТОРОЙ (test)</div>
<div class="t" style="left:1736.79px;top:608.20px;font-size:19.6px;color:#3a3b45;">3 000,00 ₽</div>
<div class="t" style="left:1850.21px;top:608.20px;font-size:19.6px;color:#3a3b45;transform:scaleX(1.0380);transform-origin:0 0;">Принят (УКД)</div>
<svg class="b" style="left:2157.5px;top:606.82px;" width="17.5" height="23" viewBox="0 0 17.5 23"><path d="M0 1.2 Q0 0 1.2 0 H11.6 L17.5 6 V21.8 Q17.5 23 16.3 23 H1.2 Q0 23 0 21.8 Z" fill="#b80d0d"/><path d="M11.6 0 V4.8 Q11.6 6 12.8 6 H17.5" fill="none" stroke="#fff" stroke-width="1.1"/><path d="M3.6 19.2 C5.2 16.2 8.8 13.4 8.8 9.6 C8.8 7.6 7.2 7.8 7.4 9.8 C7.8 12.8 11.2 16 14.4 16.6 C15.4 16.8 15.6 15.6 14.2 15.6 C10.4 15.6 5.6 17.4 3.6 19.2 Z" fill="none" stroke="#fff" stroke-width="1.5" stroke-linejoin="round"/></svg>
<div class="b" style="left:2215.55px;top:615.12px;width:8.6px;height:8.6px;background:#1cc88a;border-radius:5px;"></div>
<div class="t" style="left:2316.08px;top:611.20px;font-size:19.6px;color:#3a3b45;transform:scaleX(1.0427);transform-origin:0 0;">Выгружен</div>
<div class="t" style="left:2510.1px;top:612.62px;font-size:15.2px;font-family:'DejaVu Sans',sans-serif;color:#3a3b45">⟲</div>
<div class="b" style="left:377px;top:643.36px;width:2194px;height:48.24px;background:#f2f2f2;"></div>
<div class="b" style="left:377px;top:643px;width:2194px;height:1px;background:#e3e6f0;"></div>
<div class="t" style="left:407.50px;top:656.20px;font-size:19.6px;color:#4e73df;"><a>4</a></div>
<div class="t" style="left:536.75px;top:656.20px;font-size:19.6px;color:#3a3b45;">06.11.2025</div>
<div class="t" style="left:829.80px;top:656.20px;font-size:19.6px;color:#3a3b45;">06.11.2025 14:40</div>
<div class="t" style="left:1167.50px;top:656.20px;font-size:19.6px;color:#3a3b45;transform:scaleX(0.9736);transform-origin:0 0;">ООО БАРЛАЙН ВТОРОЙ (test)</div>
<div class="t" style="left:1736.79px;top:656.20px;font-size:19.6px;color:#3a3b45;">1 150,00 ₽</div>
<div class="b" style="left:1844px;top:651.36px;width:152px;height:29px;background:#fdfd96;border-radius:3px;"></div>
<div class="t" style="left:1851.25px;top:656.20px;font-size:19.6px;color:#6b6414;transform:scaleX(1.0254);transform-origin:0 0;">Запрошен УКД</div>
<svg class="b" style="left:2157.5px;top:655.0600000000001px;" width="17.5" height="23" viewBox="0 0 17.5 23"><path d="M0 1.2 Q0 0 1.2 0 H11.6 L17.5 6 V21.8 Q17.5 23 16.3 23 H1.2 Q0 23 0 21.8 Z" fill="#b80d0d"/><path d="M11.6 0 V4.8 Q11.6 6 12.8 6 H17.5" fill="none" stroke="#fff" stroke-width="1.1"/><path d="M3.6 19.2 C5.2 16.2 8.8 13.4 8.8 9.6 C8.8 7.6 7.2 7.8 7.4 9.8 C7.8 12.8 11.2 16 14.4 16.6 C15.4 16.8 15.6 15.6 14.2 15.6 C10.4 15.6 5.6 17.4 3.6 19.2 Z" fill="none" stroke="#fff" stroke-width="1.5" stroke-linejoin="round"/></svg>
<div class="b" style="left:2215.55px;top:663.36px;width:8.6px;height:8.6px;background:#1cc88a;border-radius:5px;"></div>
<div class="t" style="left:2316.08px;top:659.20px;font-size:19.6px;color:#3a3b45;transform:scaleX(1.0427);transform-origin:0 0;">Выгружен</div>
<div class="t" style="left:2510.1px;top:660.86px;font-size:15.2px;font-family:'DejaVu Sans',sans-serif;color:#3a3b45">⟲</div>
<div class="b" style="left:377px;top:691px;width:2194px;height:1px;background:#e3e6f0;"></div>
<div class="t" style="left:407.50px;top:704.20px;font-size:19.6px;color:#4e73df;"><a>5</a></div>
<div class="t" style="left:536.75px;top:704.20px;font-size:19.6px;color:#3a3b45;">06.11.2025</div>
<div class="t" style="left:829.80px;top:704.20px;font-size:19.6px;color:#3a3b45;">06.11.2025 14:40</div>
<div class="t" style="left:1167.50px;top:704.20px;font-size:19.6px;color:#3a3b45;transform:scaleX(0.9736);transform-origin:0 0;">ООО БАРЛАЙН ВТОРОЙ (test)</div>
<div class="t" style="left:1736.79px;top:704.20px;font-size:19.6px;color:#3a3b45;">3 000,00 ₽</div>
<div class="t" style="left:1850.23px;top:704.20px;font-size:19.6px;color:#3a3b45;transform:scaleX(1.0213);transform-origin:0 0;">Принят</div>
<div class="b" style="left:2215.55px;top:711.6px;width:8.6px;height:8.6px;background:#1cc88a;border-radius:5px;"></div>
<div class="t" style="left:2316.08px;top:707.20px;font-size:19.6px;color:#3a3b45;transform:scaleX(1.0427);transform-origin:0 0;">Выгружен</div>
<div class="t" style="left:2510.1px;top:709.10px;font-size:15.2px;font-family:'DejaVu Sans',sans-serif;color:#3a3b45">⟲</div>
<div class="b" style="left:377px;top:735.4300000000001px;width:2194px;height:43.83px;background:#f2f2f2;"></div>
<div class="b" style="left:377px;top:735px;width:2194px;height:1px;background:#e3e6f0;"></div>
<div class="t" style="left:406.50px;top:748.20px;font-size:19.6px;color:#4e73df;"><a>177</a></div>
<div class="t" style="left:536.75px;top:748.20px;font-size:19.6px;color:#3a3b45;">20.06.2024</div>
<div class="t" style="left:829.80px;top:748.20px;font-size:19.6px;color:#3a3b45;">20.06.2024 13:30</div>
<div class="t" style="left:1167.50px;top:748.20px;font-size:19.6px;color:#3a3b45;transform:scaleX(0.9736);transform-origin:0 0;">ООО БАРЛАЙН ВТОРОЙ (test)</div>
<div class="t" style="left:1736.79px;top:748.20px;font-size:19.6px;color:#3a3b45;">2 000,00 ₽</div>
<div class="t" style="left:1850.21px;top:748.20px;font-size:19.6px;color:#3a3b45;transform:scaleX(1.0380);transform-origin:0 0;">Принят (УКД)</div>
<div class="b" style="left:2215.55px;top:755.4300000000001px;width:8.6px;height:8.6px;background:#9c9fb1;border-radius:5px;"></div>
<div class="t" style="left:2301.61px;top:751.20px;font-size:19.6px;color:#3a3b45;transform:scaleX(1.0421);transform-origin:0 0;">Не выгружен</div>
<div class="t" style="left:2510.1px;top:752.93px;font-size:15.2px;font-family:'DejaVu Sans',sans-serif;color:#3a3b45">⟲</div>
<div class="b" style="left:377px;top:779px;width:2194px;height:1px;background:#e3e6f0;"></div>
<div class="t" style="left:406.50px;top:792.20px;font-size:19.6px;color:#4e73df;"><a>176</a></div>
<div class="t" style="left:536.75px;top:792.20px;font-size:19.6px;color:#3a3b45;">03.06.2024</div>
<div class="t" style="left:829.80px;top:792.20px;font-size:19.6px;color:#3a3b45;">03.06.2024 15:46</div>
<div class="t" style="left:1167.50px;top:792.20px;font-size:19.6px;color:#3a3b45;transform:scaleX(0.9736);transform-origin:0 0;">ООО БАРЛАЙН ВТОРОЙ (test)</div>
<div class="t" style="left:1736.79px;top:792.20px;font-size:19.6px;color:#3a3b45;">2 000,00 ₽</div>
<div class="t" style="left:1850.23px;top:792.20px;font-size:19.6px;color:#3a3b45;transform:scaleX(1.0213);transform-origin:0 0;">Принят</div>
<div class="b" style="left:2215.55px;top:799.2600000000001px;width:8.6px;height:8.6px;background:#9c9fb1;border-radius:5px;"></div>
<div class="t" style="left:2301.61px;top:795.20px;font-size:19.6px;color:#3a3b45;transform:scaleX(1.0421);transform-origin:0 0;">Не выгружен</div>
<div class="t" style="left:2510.1px;top:796.76px;font-size:15.2px;font-family:'DejaVu Sans',sans-serif;color:#3a3b45">⟲</div>
<div class="b" style="left:377px;top:823.0900000000001px;width:2194px;height:43.83px;background:#f2f2f2;"></div>
<div class="b" style="left:377px;top:823px;width:2194px;height:1px;background:#e3e6f0;"></div>
<div class="t" style="left:406.50px;top:835.20px;font-size:19.6px;color:#4e73df;"><a>175</a></div>
<div class="t" style="left:535.75px;top:835.20px;font-size:19.6px;color:#3a3b45;">15.05.2024</div>
<div class="t" style="left:828.80px;top:835.20px;font-size:19.6px;color:#3a3b45;">15.05.2024 17:11</div>
<div class="t" style="left:1167.50px;top:835.20px;font-size:19.6px;color:#3a3b45;transform:scaleX(0.9736);transform-origin:0 0;">ООО БАРЛАЙН ВТОРОЙ (test)</div>
<div class="t" style="left:1736.79px;top:835.20px;font-size:19.6px;color:#3a3b45;">2 000,00 ₽</div>
<div class="b" style="left:1844px;top:831.0900000000001px;width:109px;height:29px;background:#fdfd96;border-radius:3px;"></div>
<div class="t" style="left:1851.25px;top:835.20px;font-size:19.6px;color:#6b6414;transform:scaleX(1.0150);transform-origin:0 0;">Ожидание</div>
<div class="b" style="left:2215.55px;top:843.0900000000001px;width:8.6px;height:8.6px;background:#9c9fb1;border-radius:5px;"></div>
<div class="t" style="left:2301.61px;top:839.20px;font-size:19.6px;color:#3a3b45;transform:scaleX(1.0421);transform-origin:0 0;">Не выгружен</div>
<div class="t" style="left:2510.1px;top:840.59px;font-size:15.2px;font-family:'DejaVu Sans',sans-serif;color:#3a3b45">⟲</div>
<div class="b" style="left:377px;top:867px;width:2194px;height:1px;background:#e3e6f0;"></div>
<div class="t" style="left:406.50px;top:879.20px;font-size:19.6px;color:#4e73df;"><a>174</a></div>
<div class="t" style="left:535.75px;top:879.20px;font-size:19.6px;color:#3a3b45;">15.05.2024</div>
<div class="t" style="left:828.80px;top:879.20px;font-size:19.6px;color:#3a3b45;">15.05.2024 14:00</div>
<div class="t" style="left:1167.50px;top:879.20px;font-size:19.6px;color:#3a3b45;transform:scaleX(0.9736);transform-origin:0 0;">ООО БАРЛАЙН ВТОРОЙ (test)</div>
<div class="t" style="left:1736.79px;top:879.20px;font-size:19.6px;color:#3a3b45;">3 000,00 ₽</div>
<div class="t" style="left:1850.23px;top:879.20px;font-size:19.6px;color:#3a3b45;transform:scaleX(1.0213);transform-origin:0 0;">Принят</div>
<div class="b" style="left:2215.55px;top:886.9200000000002px;width:8.6px;height:8.6px;background:#9c9fb1;border-radius:5px;"></div>
<div class="t" style="left:2301.61px;top:883.20px;font-size:19.6px;color:#3a3b45;transform:scaleX(1.0421);transform-origin:0 0;">Не выгружен</div>
<div class="t" style="left:2510.1px;top:884.42px;font-size:15.2px;font-family:'DejaVu Sans',sans-serif;color:#3a3b45">⟲</div>
<div class="b" style="left:377px;top:910.7500000000002px;width:2194px;height:43.83px;background:#f2f2f2;"></div>
<div class="b" style="left:377px;top:911px;width:2194px;height:1px;background:#e3e6f0;"></div>
<div class="t" style="left:406.50px;top:923.20px;font-size:19.6px;color:#4e73df;"><a>173</a></div>
<div class="t" style="left:535.75px;top:923.20px;font-size:19.6px;color:#3a3b45;">15.05.2024</div>
<div class="t" style="left:828.80px;top:923.20px;font-size:19.6px;color:#3a3b45;">15.05.2024 14:00</div>
<div class="t" style="left:1167.50px;top:923.20px;font-size:19.6px;color:#3a3b45;transform:scaleX(0.9736);transform-origin:0 0;">ООО БАРЛАЙН ВТОРОЙ (test)</div>
<div class="t" style="left:1736.79px;top:923.20px;font-size:19.6px;color:#3a3b45;">3 000,00 ₽</div>
<div class="t" style="left:1850.23px;top:923.20px;font-size:19.6px;color:#3a3b45;transform:scaleX(1.0213);transform-origin:0 0;">Принят</div>
<div class="b" style="left:2215.55px;top:930.7500000000002px;width:8.6px;height:8.6px;background:#9c9fb1;border-radius:5px;"></div>
<div class="t" style="left:2301.61px;top:926.20px;font-size:19.6px;color:#3a3b45;transform:scaleX(1.0421);transform-origin:0 0;">Не выгружен</div>
<div class="t" style="left:2510.1px;top:928.25px;font-size:15.2px;font-family:'DejaVu Sans',sans-serif;color:#3a3b45">⟲</div>
<div class="b" style="left:377px;top:954px;width:2194px;height:1px;background:#e3e6f0;"></div>
<div class="t" style="left:406.50px;top:967.20px;font-size:19.6px;color:#4e73df;"><a>172</a></div>
<div class="t" style="left:535.75px;top:967.20px;font-size:19.6px;color:#3a3b45;">15.05.2024</div>
<div class="t" style="left:828.80px;top:967.20px;font-size:19.6px;color:#3a3b45;">15.05.2024 13:35</div>
<div class="t" style="left:1167.50px;top:967.20px;font-size:19.6px;color:#3a3b45;transform:scaleX(0.9736);transform-origin:0 0;">ООО БАРЛАЙН ВТОРОЙ (test)</div>
<div class="t" style="left:1736.79px;top:967.20px;font-size:19.6px;color:#3a3b45;">3 000,00 ₽</div>
<div class="b" style="left:1844px;top:962.5800000000003px;width:109px;height:29px;background:#fdfd96;border-radius:3px;"></div>
<div class="t" style="left:1851.25px;top:967.20px;font-size:19.6px;color:#6b6414;transform:scaleX(1.0150);transform-origin:0 0;">Ожидание</div>
<div class="b" style="left:2215.55px;top:974.5800000000003px;width:8.6px;height:8.6px;background:#9c9fb1;border-radius:5px;"></div>
<div class="t" style="left:2301.61px;top:970.20px;font-size:19.6px;color:#3a3b45;transform:scaleX(1.0421);transform-origin:0 0;">Не выгружен</div>
<div class="t" style="left:2510.1px;top:972.08px;font-size:15.2px;font-family:'DejaVu Sans',sans-serif;color:#3a3b45">⟲</div>
<div class="b" style="left:2352.7px;top:58.75px;width:269.1px;height:365.75px;background:#fff;border-radius:7px;border:1px solid #e3e6f0;box-shadow:0 3px 39px rgba(58,59,69,.15);"></div>
<div class="t" style="left:2387.15px;top:81.20px;font-size:18.6px;color:#3a3b45;transform:scaleX(1.0455);transform-origin:0 0;">Имя:</div>
<div class="t" style="left:2435.30px;top:81.20px;font-size:18.6px;color:#3a3b45;font-weight:700;transform:scaleX(0.9660);transform-origin:0 0;">Админ Тестовый</div>
<div class="t" style="left:2387.40px;top:122.20px;font-size:18.6px;color:#3a3b45;transform:scaleX(1.0782);transform-origin:0 0;">Логин:</div>
<div class="t" style="left:2451.30px;top:122.20px;font-size:18.6px;color:#3a3b45;font-weight:700;transform:scaleX(0.9689);transform-origin:0 0;">TestAdmin</div>
<div class="t" style="left:2386.76px;top:162.20px;font-size:18.6px;color:#3a3b45;transform:scaleX(1.0432);transform-origin:0 0;">Роль:</div>
<div class="t" style="left:2439.80px;top:162.20px;font-size:18.6px;color:#3a3b45;font-weight:700;transform:scaleX(0.9736);transform-origin:0 0;">Администратор</div>
<div class="b" style="left:2387.1px;top:195.9px;width:62.8px;height:62.8px;background:#0e7eb0;border-radius:32px;"></div>
<div class="b" style="left:2387.1px;top:269.9px;width:62.8px;height:62.8px;background:#c41c16;border-radius:32px;"></div>
<div class="b" style="left:2387.1px;top:344.9px;width:62.8px;height:62.8px;background:#3f7a02;border-radius:32px;"></div>
<div class="t" style="left:2455.19px;top:217.10px;font-size:18.8px;color:#4e73df;transform:scaleX(1.0125);transform-origin:0 0;"><a>Егаис</a></div>
<div class="t" style="left:2455.15px;top:292.10px;font-size:18.8px;color:#4e73df;transform:scaleX(1.0464);transform-origin:0 0;"><a>Меркурий</a></div>
<div class="t" style="left:2456.20px;top:366.10px;font-size:18.8px;color:#4e73df;"><a>Санпин</a></div>
<svg class="b" style="left:2387.1px;top:195.9px;" width="62.8" height="62.8" viewBox="0 0 62.8 62.8"><g stroke="#fff" stroke-linejoin="round" stroke-linecap="round"><path d="M17.2 19.2 H43.6 L30.9 33.8 Z" fill="#fff" stroke-width="1.8"/><path d="M30.9 33 V45.6" fill="none" stroke-width="2.7"/><path d="M25.6 46.2 H36.6" fill="none" stroke-width="2.7"/><path d="M36.8 18.6 L39.4 14.2" fill="none" stroke-width="2"/></g><path d="M21.6 21.4 H32.2" stroke="#0e7eb0" stroke-width="1.2" fill="none" stroke-linecap="round"/><circle cx="38" cy="21.4" r="0.9" fill="#0e7eb0"/></svg>
<svg class="b" style="left:2387.1px;top:269.9px;" width="62.8" height="62.8" viewBox="0 0 62.4 62.4"><path fill="#fff" d="M15.3 23.8 Q15.6 21.8 17.8 21.8 L41.5 21.6 L43.7 18.7 L46.6 20.4 L49.8 20 L51.9 17 L51.2 21.2 L54.3 24.8 L53.9 28 L49 30 L46.2 33.5 L44.8 37 L44.1 44.9 L41.6 44.9 L41 38.8 L40 38.8 L39.4 44.9 L36.9 44.9 L36.2 36.6 Q31 34.6 26.3 36.4 L25.6 40 L25.2 44.9 L22.8 44.9 L22 39.6 L21 39.9 L20.6 44.9 L18 44.9 L16.9 37.5 L15.9 33.5 L14.5 32.6 L14.3 28 Z"/></svg>
<svg class="b" style="left:2387.1px;top:344.9px;" width="62.8" height="62.8" viewBox="0 0 62.4 62.4"><g fill="#fff"><circle cx="18" cy="21.9" r="2.7"/><circle cx="18" cy="31.3" r="2.7"/><circle cx="18" cy="40.6" r="2.7"/><rect x="22.4" y="19.1" width="26.1" height="5.6" rx="2.6"/><rect x="22.4" y="28.5" width="26.1" height="5.6" rx="2.6"/><rect x="22.4" y="37.8" width="26.1" height="5.6" rx="2.6"/></g></svg>
<svg class="b" style="left:2298px;top:52px;" width="336" height="390" viewBox="2298 52 336 390"><rect x="2302.1" y="56.1" width="329.9" height="380.7" rx="12.5" fill="none" stroke="#c81e1e" stroke-width="1.25"/></svg>
<div class="t" style="left:2316.50px;top:72.50px;font-size:48px;color:#c00000;">3</div>
</body></html>
